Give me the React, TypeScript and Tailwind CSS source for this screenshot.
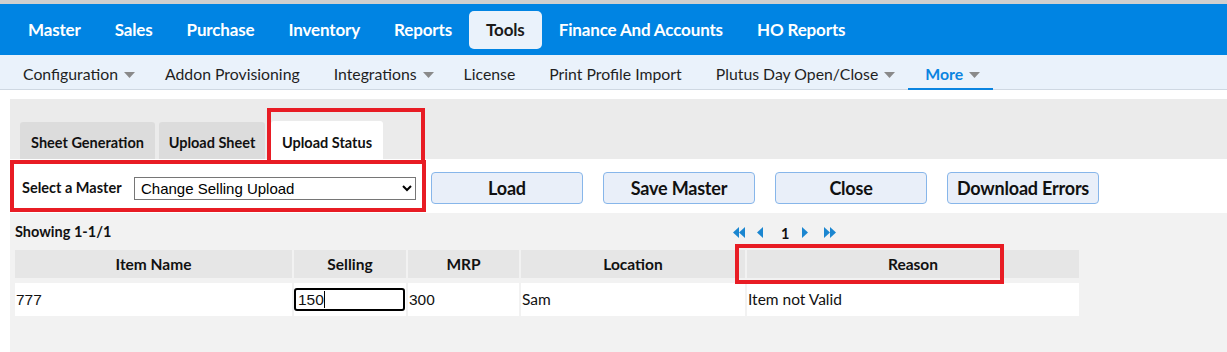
import React from "react";

const Caret = () => (
  <svg width="11" height="6" viewBox="0 0 11 6" className="ml-[6px] mt-[2px]">
    <path d="M0 0 L11 0 L5.5 6 Z" fill="#8a8a8a" />
  </svg>
);

const TriL = () => (
  <svg width="6" height="11" viewBox="0 0 6 11">
    <path d="M6 0 L6 11 L0 5.5 Z" fill="#1b86d0" />
  </svg>
);
const TriR = () => (
  <svg width="6" height="11" viewBox="0 0 6 11">
    <path d="M0 0 L0 11 L6 5.5 Z" fill="#1b86d0" />
  </svg>
);

export default function App() {
  const top = ["Master", "Sales", "Purchase", "Inventory", "Reports", "Tools", "Finance And Accounts", "HO Reports"];
  const sub: [string, boolean][] = [
    ["Configuration", true],
    ["Addon Provisioning", false],
    ["Integrations", true],
    ["License", false],
    ["Print Profile Import", false],
    ["Plutus Day Open/Close", true],
  ];
  const headers = ["Item Name", "Selling", "MRP", "Location", "Reason"];
  return (
    <div className="relative w-[1227px] h-[352px] overflow-hidden bg-white font-['Lato','Noto_Sans',sans-serif]">
      <div className="h-[4px] bg-[#cfcfcf]" />
      <nav className="h-[51px] bg-[#0084e3] flex items-center pl-[11px]">
        {top.map((t) =>
          t === "Tools" ? (
            <div key={t} className="h-[38px] px-[17px] flex items-center rounded-[5px] bg-[#eaf2fb] text-[#1a1a1a] text-[17px] font-bold tracking-[-0.15px]">
              {t}
            </div>
          ) : (
            <div key={t} className="h-[38px] px-[17px] flex items-center text-white text-[17px] font-bold tracking-[-0.15px]">
              {t}
            </div>
          )
        )}
      </nav>
      <div className="h-[35px] bg-[#eaf2fb] border-b border-[#cfd8e2] flex items-stretch pl-[6px]">
        {sub.map(([t, c]) => (
          <div key={t} className={c ? "pl-[17px] pr-[13px] pt-[3px] flex items-center text-[15.8px] text-[#1f1f1f]" : "px-[17px] pt-[3px] flex items-center text-[15.8px] text-[#1f1f1f]"}>
            {t}
            {c && <Caret />}
          </div>
        ))}
        <div className="relative pl-[17px] pr-[13px] pt-[3px] flex items-center text-[15.8px] font-bold text-[#0a84e0]">
          More
          <Caret />
          <div className="absolute left-0 right-0 bottom-[-1px] h-[2px] bg-[#0a84e0]" />
        </div>
      </div>
      <div className="pl-[10px] pt-[9px]">
        <div className="bg-[#ebebeb] h-[253px] flex flex-col">
          <div className="h-[60px] pl-[10px] flex items-end gap-[4px]">
            <div className="h-[37px] w-[135px] pt-[5px] flex items-center justify-center rounded-t-[3px] bg-[#dcdcdc] text-[14.5px] font-bold text-[#111]">Sheet Generation</div>
            <div className="h-[37px] w-[106px] pt-[5px] flex items-center justify-center rounded-t-[3px] bg-[#dcdcdc] text-[14.5px] font-bold text-[#111]">Upload Sheet</div>
            <div className="h-[38px] ml-[2px] w-[112px] pt-[6px] flex items-center justify-center rounded-t-[3px] bg-white text-[14.5px] font-bold text-[#111]">Upload Status</div>
          </div>
          <div className="h-[54px] bg-white flex items-center pt-[4px]">
            <div className="pl-[12px] text-[14.5px] font-bold text-[#111] w-[124px]">Select a Master</div>
            <select
              defaultValue="csu"
              className="w-[282px] h-[23px] border border-[#767676] bg-white text-[15px] text-black pl-[2px] font-['Liberation_Sans',Arial,sans-serif]"
            >
              <option value="csu">Change Selling Upload</option>
            </select>
            <div className="ml-[15px] flex gap-[20px]">
              {["Load", "Save Master", "Close", "Download Errors"].map((b) => (
                <div key={b} className="h-[32px] min-w-[152px] px-[8px] flex items-center justify-center rounded-[4px] border border-[#87b6ea] bg-[#e9eff9] text-[18px] font-bold text-[#111] tracking-[-0.2px]">
                  {b}
                </div>
              ))}
            </div>
          </div>
          <div className="flex-1 bg-[#f2f2f2] px-[5px] pt-[9px]">
            <div className="h-[20px] flex items-center">
              <div className="w-[718px] text-[14.5px] font-bold text-[#111]">Showing 1-1/1</div>
              <div className="flex items-center">
                <TriL />
                <TriL />
                <div className="ml-[12px]"><TriL /></div>
                <div className="ml-[18px] mr-[13px] text-[14.5px] font-bold text-[#111] mt-[3px]">1</div>
                <TriR />
                <div className="ml-[16px] flex"><TriR /><TriR /></div>
              </div>
            </div>
            <div className="mt-[8px] grid grid-cols-[277px_112px_111px_224px_332px] gap-x-[2px] gap-y-[5px]">
              {headers.map((h) => (
                <div key={h} className="h-[28px] pt-[1px] bg-[#e6e6e6] flex items-center justify-center text-[15.5px] font-bold text-[#111]">
                  {h}
                </div>
              ))}
              <div className="h-[33px] bg-white flex items-center pl-[1px] text-[15.5px] text-[#111] font-['Liberation_Sans',Arial,sans-serif]">777</div>
              <div className="h-[33px] bg-white flex items-center">
                <div className="w-[111px] h-[23px] border-2 border-black rounded-[3px] flex items-center pl-[2px] text-[15.5px] text-[#111] font-['Liberation_Sans',Arial,sans-serif]">
                  150<span className="inline-block w-[1px] h-[17px] bg-black" />
                </div>
              </div>
              <div className="h-[33px] bg-white flex items-center pl-[1px] text-[15.5px] text-[#111] font-['Liberation_Sans',Arial,sans-serif]">300</div>
              <div className="h-[33px] bg-white flex items-center pl-[1px] text-[15.5px] text-[#111]">Sam</div>
              <div className="h-[33px] bg-white flex items-center pl-[1px] text-[15.5px] text-[#111]">Item not Valid</div>
            </div>
          </div>
        </div>
      </div>
      {/* annotation boxes */}
      <div className="absolute left-[267px] top-[108px] w-[158px] h-[56px] border-[4px] border-[#e81c24]" />
      <div className="absolute left-[10px] top-[160px] w-[416px] h-[52px] border-[4px] border-[#e81c24]" />
      <div className="absolute left-[735px] top-[244px] w-[269px] h-[40px] border-[4px] border-[#e81c24]" />
    </div>
  );
}
